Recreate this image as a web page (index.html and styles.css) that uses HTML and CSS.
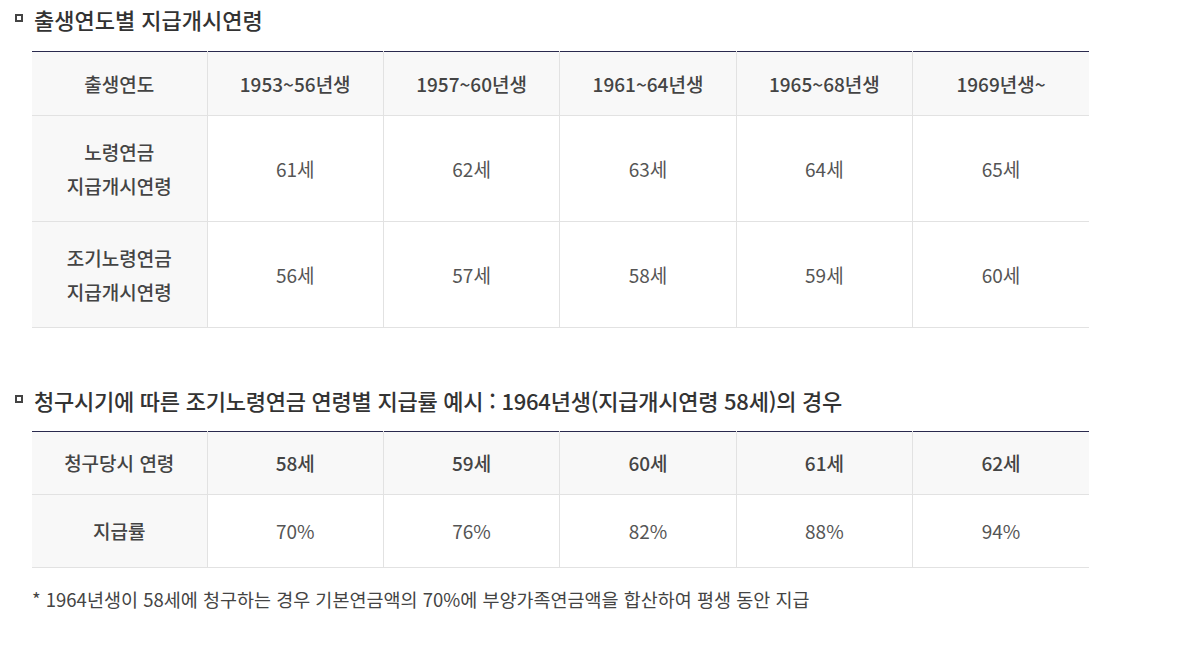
FILE: index.html
```html
<!DOCTYPE html>
<html lang="ko">
<head>
<meta charset="utf-8">
<link rel="stylesheet" href="styles.css">
</head>
<body>
<section class="sec sec-first">
  <h3 class="title"><span class="bullet"></span>출생연도별 지급개시연령</h3>
  <table class="tbl">
    <colgroup><col class="c0"><col><col><col><col><col></colgroup>
    <thead>
      <tr class="h64"><th>출생연도</th><th>1953~56년생</th><th>1957~60년생</th><th>1961~64년생</th><th>1965~68년생</th><th>1969년생~</th></tr>
    </thead>
    <tbody>
      <tr class="h106"><th>노령연금<br>지급개시연령</th><td>61세</td><td>62세</td><td>63세</td><td>64세</td><td>65세</td></tr>
      <tr class="h106"><th>조기노령연금<br>지급개시연령</th><td>56세</td><td>57세</td><td>58세</td><td>59세</td><td>60세</td></tr>
    </tbody>
  </table>
</section>
<section class="sec sec-second">
  <h3 class="title title-long"><span class="bullet"></span>청구시기에 따른 조기노령연금 연령별 지급률 예시 : 1964년생(지급개시연령 58세)의 경우</h3>
  <table class="tbl">
    <colgroup><col class="c0"><col><col><col><col><col></colgroup>
    <thead>
      <tr class="h63"><th>청구당시 연령</th><th>58세</th><th>59세</th><th>60세</th><th>61세</th><th>62세</th></tr>
    </thead>
    <tbody>
      <tr class="h73"><th>지급률</th><td>70%</td><td>76%</td><td>82%</td><td>88%</td><td>94%</td></tr>
    </tbody>
  </table>
  <p class="note">* 1964년생이 58세에 청구하는 경우 기본연금액의 70%에 부양가족연금액을 합산하여 평생 동안 지급</p>
</section>
</body>
</html>
```
FILE: styles.css
```css
html, body {
  margin: 0;
  padding: 0;
  background: #fff;
}
body {
  font-family: "Noto Sans CJK KR", "Noto Sans", sans-serif;
  color: #333;
}
.sec-first {
  padding-top: 4px;
}
.sec-second {
  padding-top: 57px;
}
.title {
  margin: 0 0 16px 14px;
  font-size: 22px;
  font-weight: 500;
  line-height: 30px;
  color: #333;
  display: flex;
  align-items: center;
}
.title-long {
  letter-spacing: -0.25px;
}
.sec-first .title {
  margin-bottom: 17px;
}
.bullet {
  width: 4px;
  height: 4px;
  border: 2px solid #444;
  margin: 0 11px 2px 1px;
  flex: none;
}
.tbl {
  margin-left: 32px;
  width: 1057px;
  border-collapse: collapse;
  table-layout: fixed;
  border-top: 1px solid #2a2a4e;
  font-size: 19px;
}
.c0 {
  width: 175px;
}
.tbl th, .tbl td {
  text-align: center;
  vertical-align: middle;
  border: 1px solid #e2e2e2;
  padding: 0 8px;
  line-height: 34px;
}
.tbl tr > :first-child {
  border-left: none;
}
.tbl tr > :last-child {
  border-right: none;
}
.tbl thead tr:first-child > * {
  border-top: 1px solid #2a2a4e;
}
.tbl th {
  background: #f8f8f8;
  font-weight: 500;
  color: #444;
}
.tbl td {
  font-weight: 400;
  color: #555;
  background: #fff;
}
.h64 > * { height: 63px; }
.h106 > * { height: 105px; }
.h63 > * { height: 62px; }
.h73 > * { height: 72px; }
.note {
  margin: 16px 0 0 32px;
  font-size: 18.5px;
  line-height: 30px;
  color: #444;
}
```
